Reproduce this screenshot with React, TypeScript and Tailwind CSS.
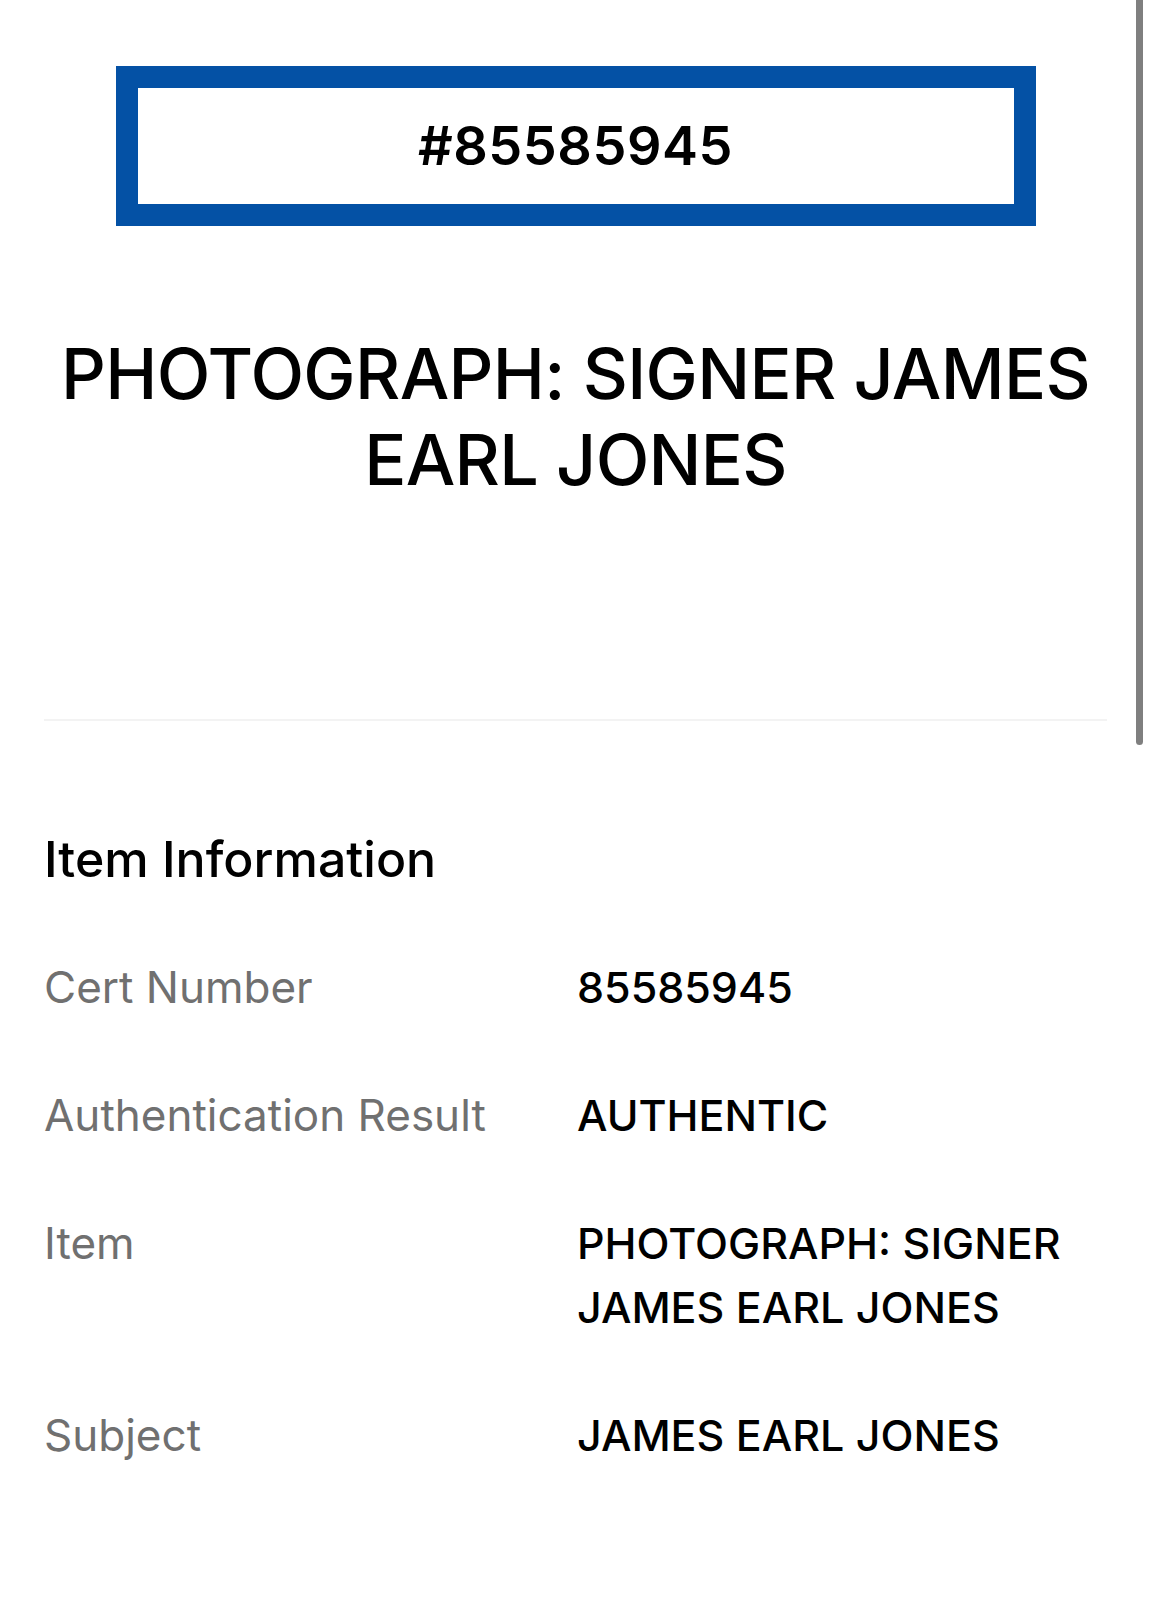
const rows: { label: string; value: string[] }[] = [
  { label: "Cert Number", value: ["85585945"] },
  { label: "Authentication Result", value: ["AUTHENTIC"] },
  { label: "Item", value: ["PHOTOGRAPH: SIGNER", "JAMES EARL JONES"] },
  { label: "Subject", value: ["JAMES EARL JONES"] },
];

export default function App() {
  return (
    <div className="relative min-h-[1600px] bg-white font-['Inter',sans-serif] text-black">
      {/* overlay scrollbar */}
      <div className="absolute right-[8px] top-0 h-[745px] w-[7px] rounded-b-full bg-[#7f7f7f]" />

      <div className="px-[44px] pt-[66px]">
        <div className="mx-auto flex h-[160px] w-[920px] items-center justify-center border-[22px] border-[#0451a5]">
          <span className="text-[54px] font-semibold leading-none tracking-[0.01em]">#85585945</span>
        </div>

        <h1 className="mt-[105px] text-center text-[70px] font-medium leading-[86px] tracking-[-0.01em]">
          PHOTOGRAPH: SIGNER JAMES
          <br />
          EARL JONES
        </h1>

        <div className="mt-[216px] h-[2px] bg-[#f3f3f3]" />

        <h2 className="mt-[110px] text-[50px] font-medium leading-[56px]">Item Information</h2>

        <div className="mt-[68px] flex flex-col gap-[64px]">
          {rows.map((r) => (
            <div key={r.label} className="flex leading-[64px]">
              <div className="w-[533px] shrink-0 text-[44px] text-[#707070]">{r.label}</div>
              <div className="text-[43px] font-medium">
                {r.value.map((v) => (
                  <div key={v}>{v}</div>
                ))}
              </div>
            </div>
          ))}
        </div>
      </div>
    </div>
  );
}
